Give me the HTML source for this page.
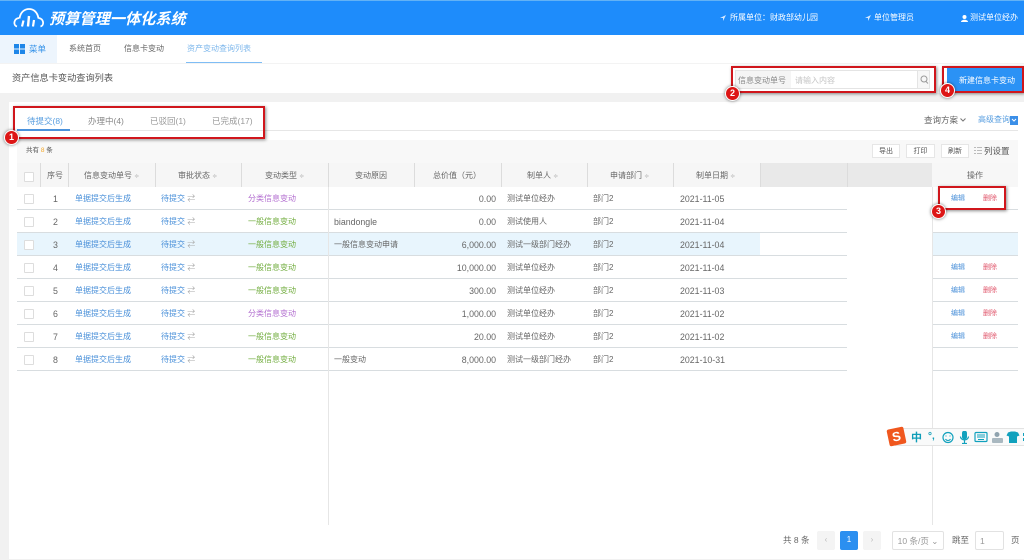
<!DOCTYPE html>
<html lang="zh"><head><meta charset="utf-8"><style>
*{box-sizing:border-box}
html,body{margin:0;padding:0}
body{width:1024px;height:560px;overflow:hidden;position:relative;background:#fff;font-family:"Liberation Sans","Noto Sans CJK SC",sans-serif;font-size:8px;color:#666;filter:blur(.35px)}
.a,.t,.b{position:absolute}
.t{white-space:nowrap;line-height:12px}
.c{text-align:center}
.r{text-align:right}
.row{position:absolute;left:17px;width:830px;height:23px;border-bottom:1px solid #d8dde0}
.row .t{top:6px}
.n{font-size:8.8px}
.cb{position:absolute;left:7px;top:7px;width:10px;height:10px;border:1px solid #ddd;background:#fff;border-radius:1px}
.blue{color:#4a90d9}.green{color:#72ad3f}.purple{color:#b36fd0}
.fx{position:absolute;left:932px;width:86px;height:23px;border-bottom:1px solid #d8dde0;background:#fff}
.fx .t{top:6px;font-size:7px}
.red{color:#e0566b}
.box{position:absolute;border:2px solid #d0161c;box-shadow:1px 1px 3px rgba(0,0,0,.45)}
.bd{position:absolute;width:15px;height:15px;border-radius:50%;background:#dd1616;border:1.5px solid #fff;box-shadow:0 0 3px rgba(0,0,0,.55);color:#fff;font:bold 9px/12px "Liberation Sans",sans-serif;text-align:center}
.sep{position:absolute;top:163px;height:24px;width:1px;background:#dcdcdc}
.h{top:170px;color:#666}
.s{color:#bbb;font-size:6px}
.btn{position:absolute;top:144px;height:14px;border:1px solid #e6e6e6;background:#fff;text-align:center;font-size:7px;line-height:13px;color:#555}
.pg{position:absolute;top:531px;height:19px;border-radius:2px;text-align:center;line-height:18px}
</style></head><body>

<!-- header -->
<div class="a" style="left:0;top:0;width:1024px;height:35px;background:#1e8cfb;border-top:1px solid #63b2f5"></div>
<svg class="a" style="left:13px;top:8px" width="32" height="20" viewBox="0 0 32 20" fill="none" stroke="#fff"><path d="M4 18.500C0 17.500 0.500 10.500 6 10" stroke-width="1.800"/><path d="M6.500 10.500C7.500 3.500 12 1 16 1C20.500 1 24.500 4 25.500 10.500" stroke-width="1.800"/><path d="M25.500 10C31 10.500 31.500 17.500 27.500 18.500" stroke-width="1.800"/><path d="M9 18.500L10.500 12.500" stroke-width="2.200"/><path d="M15 18.500L16 8" stroke-width="2.400"/><path d="M20 18.500L21 12" stroke-width="2.200"/></svg>
<div class="t" style="left:49px;top:11px;font-size:15.200px;line-height:18px;font-weight:bold;font-style:italic;color:#fff">预算管理一体化系统</div>
<svg class="a" style="left:720px;top:15px" width="6" height="6" viewBox="0 0 6 6"><path d="M6 0L0 3L3 3L3 6Z" fill="#d5e9ff"/></svg>
<div class="t" style="left:730px;top:12px;color:#fff">所属单位：财政部幼儿园</div>
<svg class="a" style="left:865px;top:15px" width="6" height="6" viewBox="0 0 6 6"><path d="M6 0L0 3L3 3L3 6Z" fill="#d5e9ff"/></svg>
<div class="t" style="left:874px;top:12px;color:#fff">单位管理员</div>
<svg class="a" style="left:961px;top:15px" width="7" height="7" viewBox="0 0 7 7"><circle cx="3.500" cy="2" r="2" fill="#fff"/><path d="M0 7C0 4 7 4 7 7Z" fill="#fff"/></svg>
<div class="t" style="left:970px;top:12px;color:#fff;width:54px;overflow:hidden">测试单位经办</div>

<!-- nav -->
<div class="a" style="left:0;top:35px;width:57px;height:28px;background:#edf5fd"></div>
<svg class="a" style="left:14px;top:44px" width="11" height="10" viewBox="0 0 11 10" fill="#1e86e8"><rect width="5" height="4.500"/><rect x="6" width="5" height="4.500"/><rect y="5.500" width="5" height="4.500"/><rect x="6" y="5.500" width="5" height="4.500"/></svg>
<div class="t" style="left:29px;top:43px;color:#2f8fe8;font-size:8.500px">菜单</div>
<div class="t" style="left:69px;top:43px">系统首页</div>
<div class="t" style="left:124px;top:43px">信息卡变动</div>
<div class="t" style="left:187px;top:43px;color:#7fb8ec">资产变动查询列表</div>
<div class="a" style="left:186px;top:62px;width:76px;height:1px;background:#7fbdf5"></div>

<!-- title -->
<div class="a" style="left:0;top:63px;width:1024px;height:1px;background:#f3f3f3"></div>
<div class="t" style="left:12px;top:72px;font-size:9.200px;color:#555">资产信息卡变动查询列表</div>
<div class="a" style="left:735px;top:70px;width:195px;height:19px;background:#fff;border:1px solid #e4e4e4"></div>
<div class="a" style="left:736px;top:71px;width:55px;height:17px;background:#f5f5f5"></div>
<div class="a" style="left:917px;top:71px;width:12px;height:17px;background:#f7f7f7;border-left:1px solid #e4e4e4"></div>
<div class="t" style="left:738px;top:75px;color:#888">信息变动单号</div>
<div class="t" style="left:795px;top:75px;color:#c5c5c5">请输入内容</div>
<svg class="a" style="left:920px;top:75px" width="9" height="10" viewBox="0 0 9 10" fill="none" stroke="#999"><circle cx="4" cy="4" r="3"/><path d="M6 6.500L8 8.500"/></svg>
<div class="a" style="left:947px;top:68px;width:77px;height:24px;background:#2b92f5"></div>
<div class="t" style="left:959px;top:75px;color:#fff">新建信息卡变动</div>

<!-- gray -->
<div class="a" style="left:0;top:93px;width:1024px;height:9px;background:#f1f1f1"></div>
<div class="a" style="left:0;top:102px;width:9px;height:458px;background:#f1f1f1"></div>
<div class="a" style="left:9px;top:559px;width:1015px;height:1px;background:#f1f1f1"></div>

<!-- tabs -->
<div class="a" style="left:17px;top:130px;width:1001px;height:1px;background:#e6e6e6"></div>
<div class="a" style="left:17px;top:129px;width:53px;height:2px;background:#4a92dc"></div>
<div class="t" style="left:27px;top:115px;font-size:8.500px;color:#5a9fe0">待提交(8)</div>
<div class="t" style="left:88px;top:115px;font-size:8.500px;color:#888">办理中(4)</div>
<div class="t" style="left:150px;top:115px;font-size:8.500px;color:#999">已驳回(1)</div>
<div class="t" style="left:212px;top:115px;font-size:8.500px;color:#999">已完成(17)</div>
<div class="t" style="left:924px;top:114px;color:#666;font-size:8.500px">查询方案</div>
<svg class="a" style="left:960px;top:118px" width="6" height="4" viewBox="0 0 6 4" fill="none" stroke="#777"><path d="M.5 .5L3 3L5.500 .5"/></svg>
<div class="t" style="left:978px;top:114px;color:#5a9fe0">高级查询</div>
<div class="a" style="left:1010px;top:116px;width:8px;height:9px;background:#3b8fe8"></div>
<svg class="a" style="left:1011px;top:118px" width="6" height="5" viewBox="0 0 6 5" fill="none" stroke="#fff"><path d="M1 1L3 3L5 1"/></svg>

<!-- toolbar -->
<div class="a" style="left:17px;top:140px;width:1001px;height:23px;background:#f8f8f8"></div>
<div class="t" style="left:26px;top:145px;font-size:6.500px;color:#555">共有 <span style="color:#f5a623">8</span> 条</div>
<div class="btn" style="left:872px;width:28px">导出</div>
<div class="btn" style="left:906px;width:29px">打印</div>
<div class="btn" style="left:941px;width:28px">刷新</div>
<svg class="a" style="left:974px;top:147px" width="8" height="7" viewBox="0 0 8 7" stroke="#bbb"><path d="M0 .5H2M3 .5H8M0 3.500H2M3 3.500H8M0 6.500H2M3 6.500H8"/></svg>
<div class="t" style="left:984px;top:145px;font-size:8.500px;color:#555">列设置</div>

<!-- table header -->
<div class="a" style="left:17px;top:163px;width:915px;height:24px;background:#f6f6f6"></div>
<div class="a" style="left:760px;top:163px;width:172px;height:24px;background:#e9e9e9"></div>
<div class="a" style="left:932px;top:163px;width:86px;height:24px;background:#f7f7f7"></div>
<div class="sep" style="left:40px"></div><div class="sep" style="left:68px"></div><div class="sep" style="left:155px"></div><div class="sep" style="left:241px"></div><div class="sep" style="left:328px"></div><div class="sep" style="left:414px"></div><div class="sep" style="left:501px"></div><div class="sep" style="left:587px"></div><div class="sep" style="left:673px"></div><div class="sep" style="left:760px"></div><div class="sep" style="left:847px"></div>
<div class="cb" style="left:24px;top:172px;background:#fff"></div>
<div class="t h" style="left:47px">序号</div>
<div class="t h" style="left:84px">信息变动单号 <span class="s">≑</span></div>
<div class="t h" style="left:178px">审批状态 <span class="s">≑</span></div>
<div class="t h" style="left:265px">变动类型 <span class="s">≑</span></div>
<div class="t h" style="left:355px">变动原因</div>
<div class="t h" style="left:433px">总价值（元）</div>
<div class="t h" style="left:527px">制单人 <span class="s">≑</span></div>
<div class="t h" style="left:610px">申请部门 <span class="s">≑</span></div>
<div class="t h" style="left:696px">制单日期 <span class="s">≑</span></div>
<div class="t h" style="left:967px">操作</div>

<!-- row 3 highlight -->
<div class="a" style="left:17px;top:233px;width:743px;height:23px;background:#e8f5fd"></div>
<div class="a" style="left:932px;top:233px;width:86px;height:23px;background:#e8f5fd"></div>

<!-- rows -->
<div class="row" style="top:187px"><div class="cb"></div><div class="t n" style="left:36px">1</div><div class="t blue" style="left:58px">单据提交后生成</div><div class="t blue" style="left:144px">待提交 <span style="color:#aaa">⇄</span></div><div class="t purple" style="left:231px">分类信息变动</div><div class="t n r" style="left:430px;width:49px">0.00</div><div class="t" style="left:490px">测试单位经办</div><div class="t" style="left:576px">部门2</div><div class="t n" style="left:663px">2021-11-05</div></div>
<div class="row" style="top:210px"><div class="cb"></div><div class="t n" style="left:36px">2</div><div class="t blue" style="left:58px">单据提交后生成</div><div class="t blue" style="left:144px">待提交 <span style="color:#aaa">⇄</span></div><div class="t green" style="left:231px">一般信息变动</div><div class="t n" style="left:317px">biandongle</div><div class="t n r" style="left:430px;width:49px">0.00</div><div class="t" style="left:490px">测试使用人</div><div class="t" style="left:576px">部门2</div><div class="t n" style="left:663px">2021-11-04</div></div>
<div class="row" style="top:233px"><div class="cb"></div><div class="t n" style="left:36px">3</div><div class="t blue" style="left:58px">单据提交后生成</div><div class="t blue" style="left:144px">待提交 <span style="color:#aaa">⇄</span></div><div class="t green" style="left:231px">一般信息变动</div><div class="t" style="left:317px">一般信息变动申请</div><div class="t n r" style="left:430px;width:49px">6,000.00</div><div class="t" style="left:490px">测试一级部门经办</div><div class="t" style="left:576px">部门2</div><div class="t n" style="left:663px">2021-11-04</div></div>
<div class="row" style="top:256px"><div class="cb"></div><div class="t n" style="left:36px">4</div><div class="t blue" style="left:58px">单据提交后生成</div><div class="t blue" style="left:144px">待提交 <span style="color:#aaa">⇄</span></div><div class="t green" style="left:231px">一般信息变动</div><div class="t n r" style="left:430px;width:49px">10,000.00</div><div class="t" style="left:490px">测试单位经办</div><div class="t" style="left:576px">部门2</div><div class="t n" style="left:663px">2021-11-04</div></div>
<div class="row" style="top:279px"><div class="cb"></div><div class="t n" style="left:36px">5</div><div class="t blue" style="left:58px">单据提交后生成</div><div class="t blue" style="left:144px">待提交 <span style="color:#aaa">⇄</span></div><div class="t green" style="left:231px">一般信息变动</div><div class="t n r" style="left:430px;width:49px">300.00</div><div class="t" style="left:490px">测试单位经办</div><div class="t" style="left:576px">部门2</div><div class="t n" style="left:663px">2021-11-03</div></div>
<div class="row" style="top:302px"><div class="cb"></div><div class="t n" style="left:36px">6</div><div class="t blue" style="left:58px">单据提交后生成</div><div class="t blue" style="left:144px">待提交 <span style="color:#aaa">⇄</span></div><div class="t purple" style="left:231px">分类信息变动</div><div class="t n r" style="left:430px;width:49px">1,000.00</div><div class="t" style="left:490px">测试单位经办</div><div class="t" style="left:576px">部门2</div><div class="t n" style="left:663px">2021-11-02</div></div>
<div class="row" style="top:325px"><div class="cb"></div><div class="t n" style="left:36px">7</div><div class="t blue" style="left:58px">单据提交后生成</div><div class="t blue" style="left:144px">待提交 <span style="color:#aaa">⇄</span></div><div class="t green" style="left:231px">一般信息变动</div><div class="t n r" style="left:430px;width:49px">20.00</div><div class="t" style="left:490px">测试单位经办</div><div class="t" style="left:576px">部门2</div><div class="t n" style="left:663px">2021-11-02</div></div>
<div class="row" style="top:348px"><div class="cb"></div><div class="t n" style="left:36px">8</div><div class="t blue" style="left:58px">单据提交后生成</div><div class="t blue" style="left:144px">待提交 <span style="color:#aaa">⇄</span></div><div class="t green" style="left:231px">一般信息变动</div><div class="t" style="left:317px">一般变动</div><div class="t n r" style="left:430px;width:49px">8,000.00</div><div class="t" style="left:490px">测试一级部门经办</div><div class="t" style="left:576px">部门2</div><div class="t n" style="left:663px">2021-10-31</div></div>

<!-- fixed right column -->
<div class="fx" style="top:187px"><div class="t blue" style="left:19px">编辑</div><div class="t red" style="left:51px">删除</div></div>
<div class="fx" style="top:210px"></div>
<div class="fx" style="top:233px;background:#e8f5fd"></div>
<div class="fx" style="top:256px"><div class="t blue" style="left:19px">编辑</div><div class="t red" style="left:51px">删除</div></div>
<div class="fx" style="top:279px"><div class="t blue" style="left:19px">编辑</div><div class="t red" style="left:51px">删除</div></div>
<div class="fx" style="top:302px"><div class="t blue" style="left:19px">编辑</div><div class="t red" style="left:51px">删除</div></div>
<div class="fx" style="top:325px"><div class="t blue" style="left:19px">编辑</div><div class="t red" style="left:51px">删除</div></div>
<div class="fx" style="top:348px"></div>

<!-- vertical lines -->
<div class="a" style="left:328px;top:187px;width:1px;height:338px;background:#e6e6e6"></div>
<div class="a" style="left:932px;top:187px;width:1px;height:338px;background:#e6e6e6"></div>

<!-- IME bar -->
<div class="a" style="left:895px;top:428px;width:129px;height:18px;background:#f9fafa;border-top:1px solid #e3e3e3;border-bottom:1px solid #e3e3e3"></div>
<div class="a" style="left:888px;top:428px;width:17px;height:17px;background:#f0571e;border-radius:2px;transform:rotate(-12deg);color:#fff;font:bold 13px/17px 'Liberation Sans',sans-serif;text-align:center">S</div>
<div class="t" style="left:911px;top:432px;font-size:11px;color:#0f9db8;font-weight:bold">中</div>
<div class="t" style="left:928px;top:431px;font-size:10px;color:#0f9db8;font-weight:bold">°,</div>
<svg class="a" style="left:941px;top:431px" width="84" height="13" viewBox="0 0 84 13" fill="none" stroke="#11a1bd"><circle cx="7" cy="6.500" r="5" stroke-width="1.200"/><path d="M4.500 8C5.500 10 8.500 10 9.500 8M5 4.500V5.500M9 4.500V5.500"/><rect x="21.500" y="0" width="4" height="8" rx="2" fill="#11a1bd"/><path d="M19.500 5.500C19.500 10 27.500 10 27.500 5.500M23.500 9V12.500M21 12.500H26" stroke-width="1.200"/><rect x="34" y="1.500" width="12" height="9" rx="1" stroke-width="1.200"/><path d="M36 4H44M36 6H44M37 8.500H43"/><circle cx="56" cy="3.500" r="2.500" fill="#8fa3ae" stroke="none"/><rect x="51" y="7" width="11" height="5" rx="1" fill="#a9b8c0" stroke="none"/><path d="M67 1.500L70 0.500H74L77 1.500L78.500 4.500L76 5.500V12H68V5.500L65.500 4.500Z" fill="#11a1bd" stroke="none"/><rect x="82" y="2" width="2" height="3" fill="#11a1bd" stroke="none"/><rect x="82" y="7" width="2" height="3" fill="#11a1bd" stroke="none"/></svg>

<!-- pagination -->
<div class="t" style="left:783px;top:534px;font-size:8.500px">共 8 条</div>
<div class="pg" style="left:817px;width:18px;background:#f4f4f4;color:#bbb">‹</div>
<div class="pg" style="left:840px;width:18px;background:#2b8ff0;color:#fff">1</div>
<div class="pg" style="left:863px;width:18px;background:#f4f4f4;color:#bbb">›</div>
<div class="pg" style="left:892px;width:52px;border:1px solid #e2e2e2;color:#999;font-size:8.500px">10 条/页 ⌄</div>
<div class="t" style="left:952px;top:534px;font-size:8.500px">跳至</div>
<div class="pg" style="left:975px;width:29px;border:1px solid #e2e2e2;color:#999;text-align:left;padding-left:4px;font-size:8.500px">1</div>
<div class="t" style="left:1011px;top:534px;font-size:8.500px">页</div>

<!-- annotations -->
<div class="box" style="left:13px;top:106px;width:252px;height:33px"></div>
<div class="box" style="left:731px;top:66px;width:205px;height:27px"></div>
<div class="box" style="left:938px;top:186px;width:68px;height:24px"></div>
<div class="box" style="left:942px;top:66px;width:82px;height:27px"></div>
<div class="bd" style="left:4px;top:130px">1</div>
<div class="bd" style="left:725px;top:86px">2</div>
<div class="bd" style="left:931px;top:204px">3</div>
<div class="bd" style="left:940px;top:83px">4</div>
</body></html>
